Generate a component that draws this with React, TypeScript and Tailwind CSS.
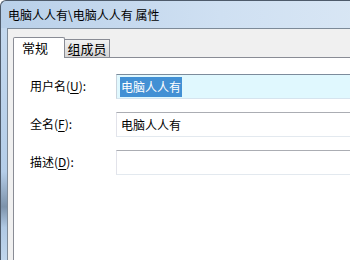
import React from "react";

type Field = {
	label: string;
	key: string;
	value: string;
	active?: boolean;
};

const fields: Field[] = [
	{ label: "用户名", key: "U", value: "电脑人人有", active: true },
	{ label: "全名", key: "F", value: "电脑人人有" },
	{ label: "描述", key: "D", value: "" },
];

export default function App() {
	return (
		<div className="w-[350px] h-[260px] overflow-hidden bg-white font-['Noto_Sans_CJK_SC',sans-serif] text-[12px] text-black">
			<div className="w-[400px] h-full flex flex-col rounded-tl-[6px] overflow-hidden border-l border-t border-[#4e5b6b] bg-[linear-gradient(90deg,#b9d0e9,#cfe0f2_55%,#dbe8f5)]">
				{/* title bar */}
				<div className="h-[27px] shrink-0 flex items-center pl-[7px]">
					电脑人人有\电脑人人有 属性
				</div>
				<div className="flex flex-1">
					{/* left frame */}
					<div className="w-[6px] shrink-0 bg-[linear-gradient(180deg,#c3d8ee_0%,#b4cde8_62%,#7d93ab_77%,#b0c9e4_86%,#c0d6ec_100%)]" />
					{/* client area */}
					<div className="flex-1 flex flex-col border-l border-t border-[#7d8a98] bg-[#f0f0f0] pl-[5px] pt-[7px]">
						<div className="flex items-end h-[21px] relative z-10">
							<div className="h-[21px] w-[52px] bg-white border border-b-0 border-[#898c95] rounded-t-[2px] flex items-center pl-[8px] -mb-px text-[13px]">
								常规
							</div>
							<div className="h-[18px] w-[45px] border border-l-0 border-b-0 border-[#898c95] bg-[linear-gradient(180deg,#f2f2f2,#e4e4e4_50%,#d6d6d6)] flex items-center justify-center text-[13px]">
								组成员
							</div>
						</div>
						<div className="flex-1 bg-white border-l border-t border-[#898c95] pl-[16px] pt-[16px] flex flex-col gap-[13px]">
							{fields.map(f => (
								<div key={f.key} className="flex items-center h-[25px]">
									<span className="w-[86px] shrink-0 pb-[2px]">
										{f.label}(<span className="underline underline-offset-2">{f.key}</span>):
									</span>
									<div
										className={
											f.active
												? "flex-1 h-[25px] bg-[#e0f8fe] border border-[#7c8c9c] border-l-[#c9d4de] border-b-[#d6e4ee] flex items-center pl-[3px]"
												: "flex-1 h-[25px] bg-white border border-[#abadb3] border-l-[#e2e3ea] border-b-[#e3e9ef] flex items-center pl-[3px]"
										}
									>
										{f.active ? (
											<span className="bg-[#4290d4] text-white px-[1px] leading-[20px]">{f.value}</span>
										) : (
											<span className="px-[1px]">{f.value}</span>
										)}
									</div>
								</div>
							))}
						</div>
					</div>
				</div>
			</div>
		</div>
	);
}
